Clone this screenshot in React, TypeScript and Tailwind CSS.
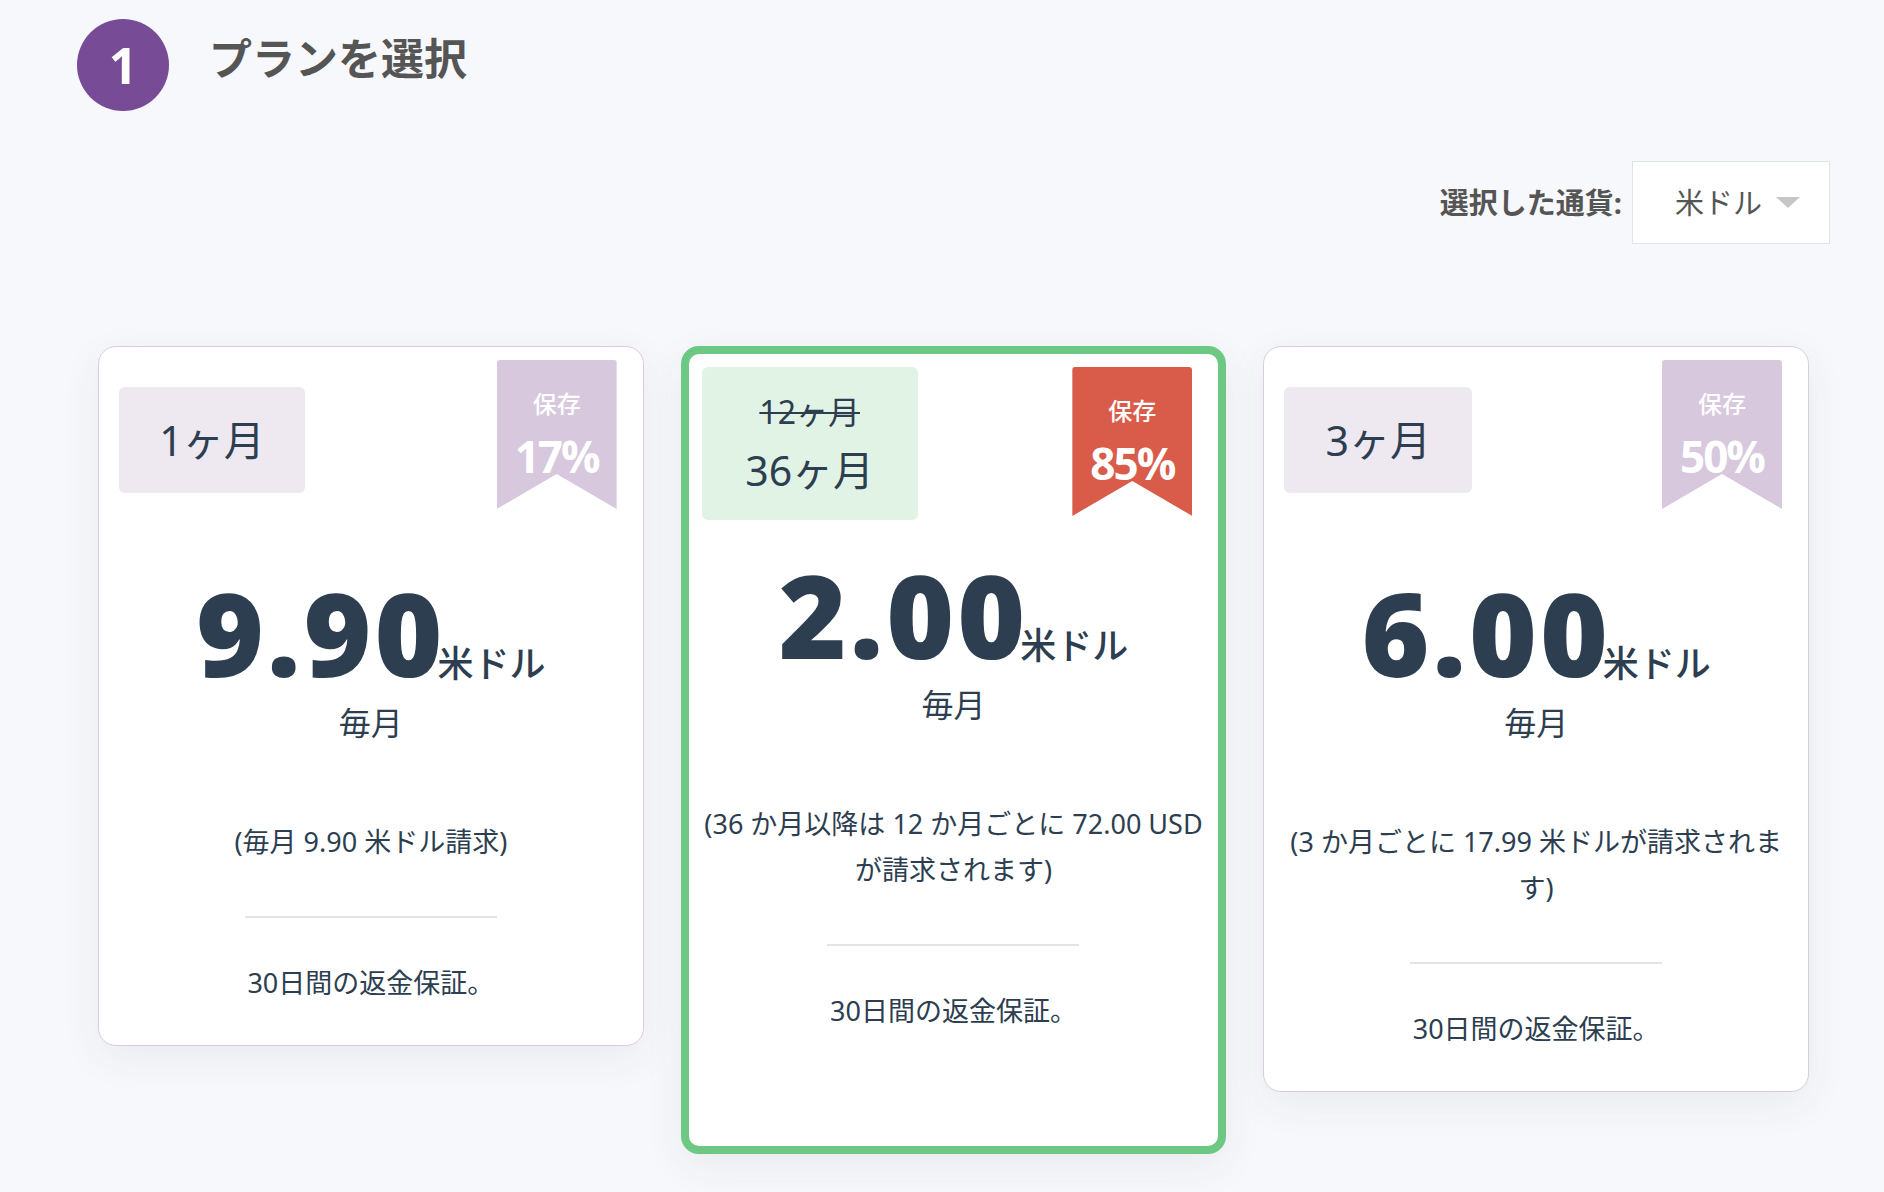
import type { ReactNode } from "react"

interface Plan {
    id: number
    duration: ReactNode
    pillClass: string
    ribbonClass: string
    save: string
    price: string
    billing: string
    highlighted?: boolean
}

const plans: Plan[] = [
    {
        id: 1,
        duration: <span className="text-[41px] leading-none">1ヶ月</span>,
        pillClass: "ml-[20px] mt-[40px] w-[186px] h-[106px] bg-[#eee8f1]",
        ribbonClass: "bg-[#d8c8de]",
        save: "17%",
        price: "9.90",
        billing: "(毎月 9.90 米ドル請求)",
    },
    {
        id: 2,
        duration: (
            <div className="flex flex-col items-center">
                <span className="text-[32px] leading-none line-through decoration-[2px]">12ヶ月</span>
                <span className="text-[41px] leading-none mt-[22px]">36ヶ月</span>
            </div>
        ),
        pillClass: "ml-[13px] mt-[13px] w-[216px] h-[153px] bg-[#e1f3e4]",
        ribbonClass: "bg-[#d95c4b]",
        save: "85%",
        price: "2.00",
        billing: "(36 か月以降は 12 か月ごとに 72.00 USD が請求されます)",
        highlighted: true,
    },
    {
        id: 3,
        duration: <span className="text-[41px] leading-none">3ヶ月</span>,
        pillClass: "ml-[20px] mt-[40px] w-[188px] h-[106px] bg-[#eee8f1]",
        ribbonClass: "bg-[#d8c8de]",
        save: "50%",
        price: "6.00",
        billing: "(3 か月ごとに 17.99 米ドルが請求されます)",
    },
]

const PlanCard = ({ plan }: { plan: Plan }) => {
    return (
        <div
            className={`relative w-[546px] bg-white rounded-[18px] shadow-[0_12px_40px_rgba(40,50,80,0.07)] ${plan.highlighted
                ? "border-[8px] border-[#6cc883] pb-[113px]"
                : "border border-[#dccbe0] pb-[40px]"
                }`}
        >
            {/* Duration pill */}
            <div className={`flex items-center justify-center rounded-[6px] text-[#2c3e50] ${plan.pillClass}`}>
                {plan.duration}
            </div>

            {/* Savings ribbon */}
            <div
                className={`absolute top-[13px] right-[26px] w-[120px] h-[149px] rounded-t-[3px] flex flex-col items-center pt-[32px] text-white [clip-path:polygon(0_0,100%_0,100%_100%,50%_calc(100%-35px),0_100%)] ${plan.ribbonClass}`}
            >
                <span className="text-[24px] leading-[24px] font-medium">保存</span>
                <span className="mt-[18px] text-[44px] leading-[44px] font-bold tracking-[-2px] font-['Open_Sans',sans-serif]">
                    {plan.save}
                </span>
            </div>

            <div className={`flex flex-col items-center text-[#2c3e50] ${plan.highlighted ? "px-[11px] mt-[35px]" : "px-[18px] mt-[80px]"}`}>
                {/* Price */}
                <div className="flex items-baseline justify-center h-[118px]">
                    <span className="font-['Open_Sans',sans-serif] font-extrabold text-[116px] leading-[118px] tracking-[3px]">
                        {plan.price}
                    </span>
                    <span className="text-[36px] leading-none font-medium -ml-[8px]">米ドル</span>
                </div>
                <div className="mt-[16px] text-[32px] leading-[32px]">毎月</div>

                {/* Billing */}
                <p className="mt-[80px] text-[27px] leading-[46px] text-center">{plan.billing}</p>

                <div className="mt-[51px] w-[252px] h-[2px] bg-[#e4e4e7]" />

                <p className="mt-[42px] text-[27px] leading-[45px]">30日間の返金保証。</p>
            </div>
        </div>
    )
}

export default function App() {
    return (
        <div className="min-h-screen bg-[#f7f8fb] font-['Noto_Sans','Noto_Sans_CJK_JP',sans-serif]">
            <div className="pl-[77px] pr-[54px] pt-[19px]">
                {/* Step header */}
                <div className="flex items-center">
                    <div className="w-[92px] h-[92px] rounded-full bg-[#774b95] flex items-center justify-center text-white text-[50px] font-bold font-['Open_Sans',sans-serif]">
                        1
                    </div>
                    <h1 className="ml-[40px] -mt-[12px] text-[43px] font-bold text-[#555555]">プランを選択</h1>
                </div>

                {/* Currency */}
                <div className="mt-[50px] flex items-center justify-end">
                    <span className="text-[29px] font-bold text-[#555555]">選択した通貨:</span>
                    <button className="ml-[10px] w-[198px] h-[83px] bg-white border border-[#dfe3ea] flex items-center pl-[42px] text-[29px] text-[#555555]">
                        米ドル
                        <svg width="24" height="12" viewBox="0 0 24 12" className="ml-[14px]">
                            <path d="M0 0 L24 0 L12 11 Z" fill="#c6c6c6" />
                        </svg>
                    </button>
                </div>

                {/* Plans */}
                <div className="mt-[102px] px-[21px] flex items-start gap-[37px] pb-[40px]">
                    {plans.map((plan) => (
                        <PlanCard key={plan.id} plan={plan} />
                    ))}
                </div>
            </div>
        </div>
    )
}
